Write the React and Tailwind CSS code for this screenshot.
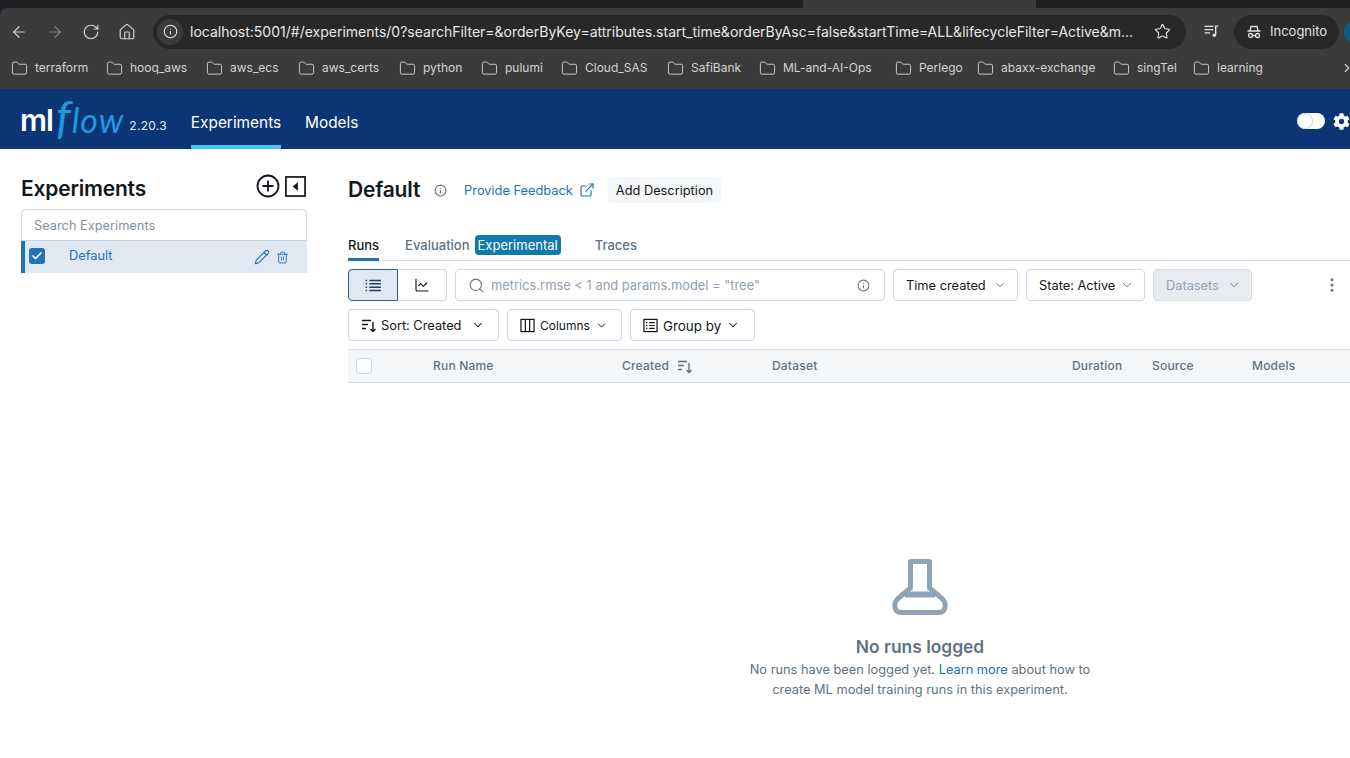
import { ArrowLeft, ArrowRight, RotateCw, Home, Info, Star, Folder, ChevronRight, ChevronDown, Search, ExternalLink, LineChart, MoreVertical, Pencil, Trash2, Check } from "lucide-react";
import { FaCog } from "react-icons/fa";

const BOOKMARKS = [
    ["terraform", "w-[95px]"],
    ["hooq_aws", "w-[100px]"],
    ["aws_ecs", "w-[92px]"],
    ["aws_certs", "w-[101px]"],
    ["python", "w-[82px]"],
    ["pulumi", "w-[80px]"],
    ["Cloud_SAS", "w-[106px]"],
    ["SafiBank", "w-[92px]"],
    ["ML-and-AI-Ops", "w-[136px]"],
    ["Perlego", "w-[82px]"],
    ["abaxx-exchange", "w-[136px]"],
    ["singTel", "w-[80px]"],
    ["learning", "w-[90px]"],
];

function SortIcon({ className }) {
    return (
        <svg viewBox="0 0 16 16" fill="none" stroke="currentColor" strokeWidth="1.4" className={className}>
            <path d="M1 3.5h9M1 7.5h6M1 11.5h4M12 5v9.5M9.5 12l2.5 2.5 2.5-2.5" />
        </svg>
    );
}

function IncognitoIcon() {
    return (
        <svg viewBox="0 0 16 16" fill="none" stroke="currentColor" strokeWidth="1.3" className="w-4 h-4">
            <path d="M4 6.5 5 2.5h6l1 4M1.5 7h13" />
            <circle cx="4.5" cy="11.5" r="2" />
            <circle cx="11.5" cy="11.5" r="2" />
            <path d="M6.5 11.5h3" />
        </svg>
    );
}

function QueueIcon() {
    return (
        <svg viewBox="0 0 16 14" className="w-[15px] h-[13px] ml-[18px] shrink-0" fill="none" stroke="currentColor" strokeWidth="1.5">
            <path d="M.5 1.5h9.5M.5 5h9.5M.5 8.5h6M12.5 10.5V1.2h2.8" />
            <circle cx="11" cy="11" r="1.9" fill="currentColor" stroke="none" />
        </svg>
    );
}

function ListIcon() {
    return (
        <svg viewBox="0 0 18 14" fill="none" stroke="currentColor" strokeWidth="1.6" className="w-[17px] h-[13px]">
            <path d="M4.5 1.5H17M4.5 5.2H17M4.5 8.9H17M4.5 12.5H17M.5 1.5h1.6M.5 5.2h1.6M.5 8.9h1.6M.5 12.5h1.6" />
        </svg>
    );
}

function ColumnsIcon() {
    return (
        <svg viewBox="0 0 16 16" fill="none" stroke="currentColor" strokeWidth="1.3" className="w-[15px] h-[15px]">
            <rect x="1" y="1.5" width="14" height="13" />
            <path d="M5.7 1.5v13M10.3 1.5v13" />
        </svg>
    );
}

function GroupIcon() {
    return (
        <svg viewBox="0 0 16 16" fill="none" stroke="currentColor" strokeWidth="1.3" className="w-[15px] h-[15px]">
            <rect x="1" y="1.5" width="14" height="13" />
            <path d="M6.5 5h6M6.5 8h6M6.5 11h6M3.2 5h1.4M3.2 8h1.4M3.2 11h1.4" />
        </svg>
    );
}

function BeakerIcon() {
    return (
        <svg viewBox="0 0 56 56" fill="none" stroke="#8fa3b5" strokeWidth="5" strokeLinejoin="round" className="w-14 h-14">
            <path d="M18.5 2.5H37.5V29L50 39.5C55 44 54 53.5 47 53.5H9C2 53.5 1 44 6 39.5L18.5 29Z" />
            <path d="M13 35.5H43" strokeWidth="6" />
        </svg>
    );
}

function BrowserChrome() {
    return (
        <div className="bg-[#202124] text-[#e3e3e3]">
            <div className="flex h-2">
                <div className="w-[803px] bg-[#202124] rounded-br-lg" />
                <div className="w-[233px] bg-[#3b3b3b]" />
                <div className="flex-1 bg-[#202124] rounded-bl-lg" />
            </div>
            <div className="flex items-center h-[47px] overflow-hidden bg-[#3b3b3b] rounded-tl-lg">
                <div className="flex items-center gap-[18px] pl-[10px] w-[153px] shrink-0">
                    <ArrowLeft size={18} strokeWidth={1.6} className="text-[#d0d0d0]" />
                    <ArrowRight size={18} strokeWidth={1.6} className="text-[#7c7c7c]" />
                    <RotateCw size={18} strokeWidth={1.6} className="text-[#d0d0d0]" />
                    <Home size={18} strokeWidth={1.6} className="text-[#d0d0d0]" />
                </div>
                <div className="flex items-center h-[34px] w-[1033px] shrink-0 rounded-full bg-[#282828]">
                    <span className="flex items-center justify-center w-[26px] h-[26px] ml-1 rounded-full bg-[#3b3b3b]">
                        <Info size={15} strokeWidth={1.8} />
                    </span>
                    <span className="ml-[7px] text-[14px] text-[#e8e8e8] whitespace-nowrap">
                        localhost:5001/#/experiments/0?searchFilter=&orderByKey=attributes.start_time&orderByAsc=false&startTime=ALL&lifecycleFilter=Active&m...
                    </span>
                    <Star size={17} strokeWidth={1.6} className="ml-auto mr-[15px] shrink-0" />
                </div>
                <QueueIcon />
                <div className="flex items-center gap-2 ml-[15px] pl-[12px] w-[105px] h-[34px] shrink-0 rounded-full bg-[#282828] text-[13px]">
                    <IncognitoIcon />
                    Incognito
                </div>
                <div className="ml-[5px] w-6 h-6 shrink-0 rounded-full bg-[#0b5a86]" />
            </div>
            <div className="flex items-center h-[34px] pb-[8px] pl-[11px] text-[12px] text-[#d4d4d4] relative bg-[#3b3b3b]">
                {BOOKMARKS.map(([name, width]) => (
                    <span key={name} className={`flex items-center gap-[7px] shrink-0 ${width}`}>
                        <Folder size={17} strokeWidth={1.3} className="shrink-0" />
                        {name}
                    </span>
                ))}
                <ChevronRight size={14} className="absolute right-[-4px] top-[6px]" />
            </div>
        </div>
    );
}

function TopNav() {
    return (
        <div className="flex h-[60px] pl-[20px] bg-[#0b3574] text-white">
            <div className="flex items-center w-[171px] shrink-0">
                <span className="text-[30px] font-semibold leading-none tracking-[-1px] mt-[1px]">ml</span>
                <span className="ml-[3px] text-[46px] italic leading-none text-[#1b9be0] -mt-[4px] font-['Lato',sans-serif]">f</span>
                <span className="ml-[1px] text-[34px] italic leading-none tracking-[1px] text-[#1b9be0] mt-[1px] font-['Lato',sans-serif]">low</span>
                <span className="ml-[5px] mt-[14px] text-[12px] tracking-[0.3px] text-[#e6ecf4]">2.20.3</span>
            </div>
            <div className="flex items-center justify-center h-full w-[90px] mr-6 pt-[12px] text-[15.4px] border-b-[4px] border-[#43c9ed] whitespace-nowrap">
                Experiments
            </div>
            <div className="flex items-center h-full pt-[8px] text-[15.4px]">Models</div>
            <div className="flex items-center ml-auto gap-2 mt-1">
                <span className="flex items-center w-7 h-4 rounded-full bg-white">
                    <span className="w-4 h-4 rounded-full bg-white border border-[#c9d3de]" />
                </span>
                <FaCog size={17} />
            </div>
        </div>
    );
}

function Sidebar() {
    return (
        <div className="w-[348px] shrink-0 pl-[21px] pr-[41px] pt-[24px]">
            <div className="flex items-center justify-between h-[30px]">
                <h2 className="mt-[2px] text-[21px] font-semibold text-[#11171c] tracking-[-0.2px]">Experiments</h2>
                <div className="flex items-center gap-[5px] -mt-1 mr-[1px]">
                    <svg viewBox="0 0 24 24" fill="none" stroke="#11171c" strokeWidth="1.8" className="w-6 h-6">
                        <circle cx="12" cy="12" r="10.5" />
                        <path d="M12 6.5v11M6.5 12h11" />
                    </svg>
                    <svg viewBox="0 0 22 22" className="w-[21px] h-[21px]">
                        <rect x="1" y="1" width="20" height="20" fill="none" stroke="#11171c" strokeWidth="1.8" />
                        <path d="M13.5 6.5v9L8 11z" fill="#11171c" />
                    </svg>
                </div>
            </div>
            <div className="flex items-center h-8 mt-[6px] pl-3 border border-[#c8d6e3] rounded-t text-[12.8px] text-[#82929f]">
                <span className="mt-[2px]">Search Experiments</span>
            </div>
            <div className="flex items-center h-8 bg-[#dfe8f3] border-l-[4px] border-[#2272b4] text-[#2272b4] text-[12.8px]">
                <span className="flex items-center justify-center w-4 h-4 ml-1 rounded-[3px] bg-[#2272b4] -mt-[2px]">
                    <Check size={12} strokeWidth={3.5} className="text-white" />
                </span>
                <span className="ml-6 -mt-[2px]">Default</span>
                <Pencil size={16} strokeWidth={1.7} className="ml-auto" />
                <Trash2 size={13} strokeWidth={1.7} className="ml-[6px] mr-[18px]" />
            </div>
        </div>
    );
}

function SelectButton({ label, widthClass, disabled }) {
    return (
        <div
            className={`flex items-center justify-between h-8 pl-3 pr-[10px] rounded border text-[12.8px] ${widthClass} ${
                disabled ? "bg-[#e8ecf0] border-[#d5dde5] text-[#93a2b0]" : "bg-white border-[#c8d6e3] text-[#11171c]"
            }`}
        >
            <span className="mt-[2px] whitespace-nowrap">{label}</span>
            <ChevronDown size={14} strokeWidth={1.6} className="text-[#5f7281]" />
        </div>
    );
}

function EmptyState() {
    return (
        <div className="flex flex-col items-center w-[1144px] pt-[176px]">
            <BeakerIcon />
            <h3 className="mt-[20px] text-[17.4px] leading-6 font-semibold text-[#5f7281]">No runs logged</h3>
            <p className="mt-[1px] text-[12.8px] leading-5 text-center text-[#5f7281]">
                No runs have been logged yet. <span className="text-[#2272b4]">Learn more</span> about how to
                <br />
                create ML model training runs in this experiment.
            </p>
        </div>
    );
}

function Main() {
    return (
        <div className="flex-1 min-w-0 overflow-hidden pt-[26px]">
            <div className="flex items-center h-[30px]">
                <h1 className="text-[21px] font-semibold text-[#11171c] tracking-[-0.2px]">Default</h1>
                <Info size={13} strokeWidth={2} className="ml-[14px] text-[#5f7281]" />
                <span className="ml-[17px] mt-[2px] text-[12.8px] text-[#2272b4]">Provide Feedback</span>
                <ExternalLink size={16} strokeWidth={1.7} className="ml-[6px] text-[#2272b4]" />
                <span className="flex items-center h-[26px] ml-[13px] px-2 rounded bg-[#f5f6f7] text-[12.8px] text-[#11171c]">
                    <span className="mt-[2px]">Add Description</span>
                </span>
            </div>
            <div className="flex items-end h-[46px] mt-[10px] border-b border-[#d5e0ea] text-[13px] font-medium text-[#5f7281]">
                <span className="flex items-center h-[24px] pb-[4px] border-b-[3px] border-[#2272b4] -mb-[1px] text-[#11171c]">Runs</span>
                <span className="flex items-center h-[30px] ml-[26px] pt-[2px]">Evaluation</span>
                <span className="flex items-center h-5 ml-[5px] px-[3px] pt-[2px] mb-[5px] rounded bg-[#0f7bab] text-white font-normal">Experimental</span>
                <span className="flex items-center h-[30px] ml-[34px] pt-[2px]">Traces</span>
            </div>
            <div className="flex items-center h-8 mt-2 pr-[9px]">
                <div className="flex items-center justify-center w-[50px] h-8 rounded-l bg-[#dfe8f3] border border-[#2c5f8d] text-[#1a3f63]">
                    <ListIcon />
                </div>
                <div className="flex items-center justify-center w-[49px] h-8 rounded-r border border-l-0 border-[#c8d6e3] text-[#11171c]">
                    <LineChart size={16} strokeWidth={1.7} />
                </div>
                <div className="flex items-center w-[430px] h-8 ml-2 pl-3 pr-[14px] rounded border border-[#c8d6e3] text-[12.9px] text-[#93a2b0]">
                    <Search size={17} strokeWidth={1.5} className="text-[#5f7281]" />
                    <span className="ml-[6px] mt-[2px]">metrics.rmse &lt; 1 and params.model = "tree"</span>
                    <Info size={13} strokeWidth={2} className="ml-auto text-[#5f7281]" />
                </div>
                <div className="flex gap-2 ml-2">
                    <SelectButton label="Time created" widthClass="w-[125px]" />
                    <SelectButton label="State: Active" widthClass="w-[119px]" />
                    <SelectButton label="Datasets" widthClass="w-[99px]" disabled />
                </div>
                <MoreVertical size={18} strokeWidth={2} className="ml-auto text-[#5f7281]" />
            </div>
            <div className="flex items-center gap-2 mt-2 text-[12.8px] text-[#11171c]">
                <div className="flex items-center w-[151px] h-8 pl-3 rounded border border-[#c8d6e3]">
                    <SortIcon className="w-4 h-4" />
                    <span className="ml-[4px] mt-[2px]">Sort: Created</span>
                    <ChevronDown size={14} strokeWidth={1.8} className="ml-[10px]" />
                </div>
                <div className="flex items-center w-[115px] h-8 pl-3 rounded border border-[#c8d6e3]">
                    <ColumnsIcon />
                    <span className="ml-[5px] mt-[2px] text-[12px]">Columns</span>
                    <ChevronDown size={13} strokeWidth={1.8} className="ml-[5px]" />
                </div>
                <div className="flex items-center w-[125px] h-8 pl-3 rounded border border-[#c8d6e3]">
                    <GroupIcon />
                    <span className="ml-[5px] mt-[2px] text-[13.4px]">Group by</span>
                    <ChevronDown size={14} strokeWidth={1.8} className="ml-[5px]" />
                </div>
            </div>
            <div className="grid grid-cols-[85px_189px_150px_300px_80px_100px_1fr] items-center h-[34px] mt-2 bg-[#f5f6f7] border-y border-[#d5e0ea] text-[12px] font-medium tracking-[0.2px] text-[#5f7281]">
                <span className="pl-2">
                    <span className="block w-4 h-4 bg-white rounded-[3px] border border-[#c8d6e3]" />
                </span>
                <span>Run Name</span>
                <span className="flex items-center gap-2">
                    Created
                    <SortIcon className="w-4 h-4" />
                </span>
                <span>Dataset</span>
                <span>Duration</span>
                <span>Source</span>
                <span>Models</span>
            </div>
            <EmptyState />
        </div>
    );
}

export default function App() {
    return (
        <div className="h-[758px] overflow-hidden bg-white font-['Inter',sans-serif]">
            <BrowserChrome />
            <TopNav />
            <div className="flex">
                <Sidebar />
                <Main />
            </div>
        </div>
    );
}
